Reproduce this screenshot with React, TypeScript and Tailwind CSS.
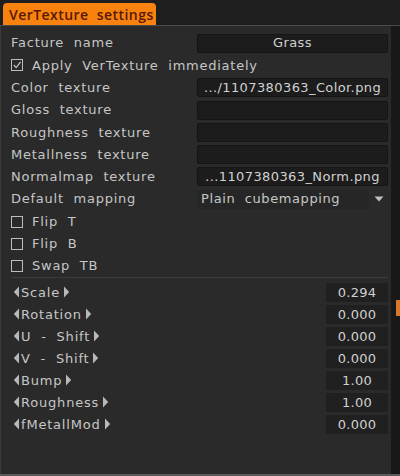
const font = { fontFamily: '"DejaVu Sans", "Noto Sans", sans-serif' };

const Row = (props: { children: React.ReactNode }) => (
  <div className="flex h-[22.3px] items-center">{props.children}</div>
);

const Label = (props: { children: React.ReactNode }) => (
  <span className="w-[186px] whitespace-pre text-[13px] tracking-[0.75px] text-[#c6c6c6]">
    {props.children}
  </span>
);

const Field = (props: { value?: string }) => (
  <div className="flex h-[19px] w-[191px] items-center justify-center rounded-[2px] border border-[#151515] bg-[#1c1c1c] text-[13px] tracking-[0.4px] text-[#d0d0d0]">
    {props.value}
  </div>
);

const Check = (props: { checked?: boolean; label: string }) => (
  <Row>
    <span className="flex h-[12px] w-[12px] items-center justify-center border border-[#bdbdbd]">
      {props.checked && (
        <svg width="10" height="10" viewBox="0 0 10 10">
          <path d="M1.8 5 L4.2 7.6 L8.6 1.8" stroke="#c6c6c6" strokeWidth="1.2" fill="none" />
        </svg>
      )}
    </span>
    <span className="ml-[9px] whitespace-pre text-[13px] tracking-[0.75px] text-[#c6c6c6]">
      {props.label}
    </span>
  </Row>
);

const Left = () => (
  <svg width="7" height="12" viewBox="0 0 7 12" className="mr-[1px]">
    <path d="M6 0.5 L0.8 6 L6 11.5 Z" fill="#b8b8b8" />
  </svg>
);

const Right = () => (
  <svg width="7" height="12" viewBox="0 0 7 12" className="ml-[3px]">
    <path d="M1 0.5 L6.2 6 L1 11.5 Z" fill="#b8b8b8" />
  </svg>
);

const Slider = (props: { label: string; value: string }) => (
  <div className="flex h-[22px] items-center">
    <div className="flex flex-1 items-center pl-[2px]">
      <Left />
      <span className="whitespace-pre text-[13px] tracking-[0.8px] text-[#c6c6c6]">{props.label}</span>
      <Right />
    </div>
    <div className="flex h-[19px] w-[62px] items-center justify-center bg-[#202020] text-[13px] tracking-[0.3px] text-[#d0d0d0]">
      {props.value}
    </div>
  </div>
);

export default function App() {
  return (
    <div className="flex h-[476px] w-[400px] flex-col bg-[#1e1e1e]" style={font}>
      <div className="flex h-[26px] shrink-0 items-end border-b border-[#4a4a4a] bg-[#1e1e1e] pl-[3px]">
        <div
          className="flex h-[22px] w-[153px] items-center rounded-t-[4px] bg-[#f7820e] pl-[6px] text-[14px] font-semibold tracking-[0.45px] text-[#5a1806] whitespace-pre"
          style={{ fontFamily: '"Open Sans", "Noto Sans", sans-serif' }}
        >
          VerTexture  settings
        </div>
      </div>
      <div className="flex flex-1 border-b-[2px] border-[#5a5a5a]">
        <div className="w-[3px] bg-[#3a3a3a]" />
        <div className="flex flex-1 flex-col bg-[#2a2a2a] pl-[10px] pr-[3px]">
          <div className="pt-[6px]">
            <Row>
              <Label>Facture  name</Label>
              <Field value="Grass" />
            </Row>
            <Check checked label="Apply  VerTexture  immediately" />
            <Row>
              <Label>Color  texture</Label>
              <Field value=".../1107380363_Color.png" />
            </Row>
            <Row>
              <Label>Gloss  texture</Label>
              <Field />
            </Row>
            <Row>
              <Label>Roughness  texture</Label>
              <Field />
            </Row>
            <Row>
              <Label>Metallness  texture</Label>
              <Field />
            </Row>
            <Row>
              <Label>Normalmap  texture</Label>
              <Field value="...1107380363_Norm.png" />
            </Row>
            <Row>
              <Label>Default  mapping</Label>
              <div className="flex h-[19px] w-[191px] items-center">
                <div className="flex h-full w-[172px] items-center bg-[#262626] pl-[4px] whitespace-pre text-[13px] tracking-[0.6px] text-[#c6c6c6]">
                  Plain  cubemapping
                </div>
                <svg width="10" height="6" viewBox="0 0 10 6" className="ml-[5px]">
                  <path d="M0.5 0.5 L9.5 0.5 L5 5.5 Z" fill="#c0c0c0" />
                </svg>
              </div>
            </Row>
            <Check label="Flip  T" />
            <Check label="Flip  B" />
            <Check label="Swap  TB" />
          </div>
          <div className="mb-[3px] h-px bg-[#3c3c3c]" />
          <div>
            <Slider label="Scale" value="0.294" />
            <Slider label="Rotation" value="0.000" />
            <Slider label="U  -  Shift" value="0.000" />
            <Slider label="V  -  Shift" value="0.000" />
            <Slider label="Bump" value="1.00" />
            <Slider label="Roughness" value="1.00" />
            <Slider label="fMetallMod" value="0.000" />
          </div>
        </div>
        <div className="flex w-[9px] flex-col bg-[#181818]">
          <div className="mt-[274px] ml-[5px] h-[16px] w-[4px] bg-[#d9782a]" />
        </div>
      </div>
    </div>
  );
}
